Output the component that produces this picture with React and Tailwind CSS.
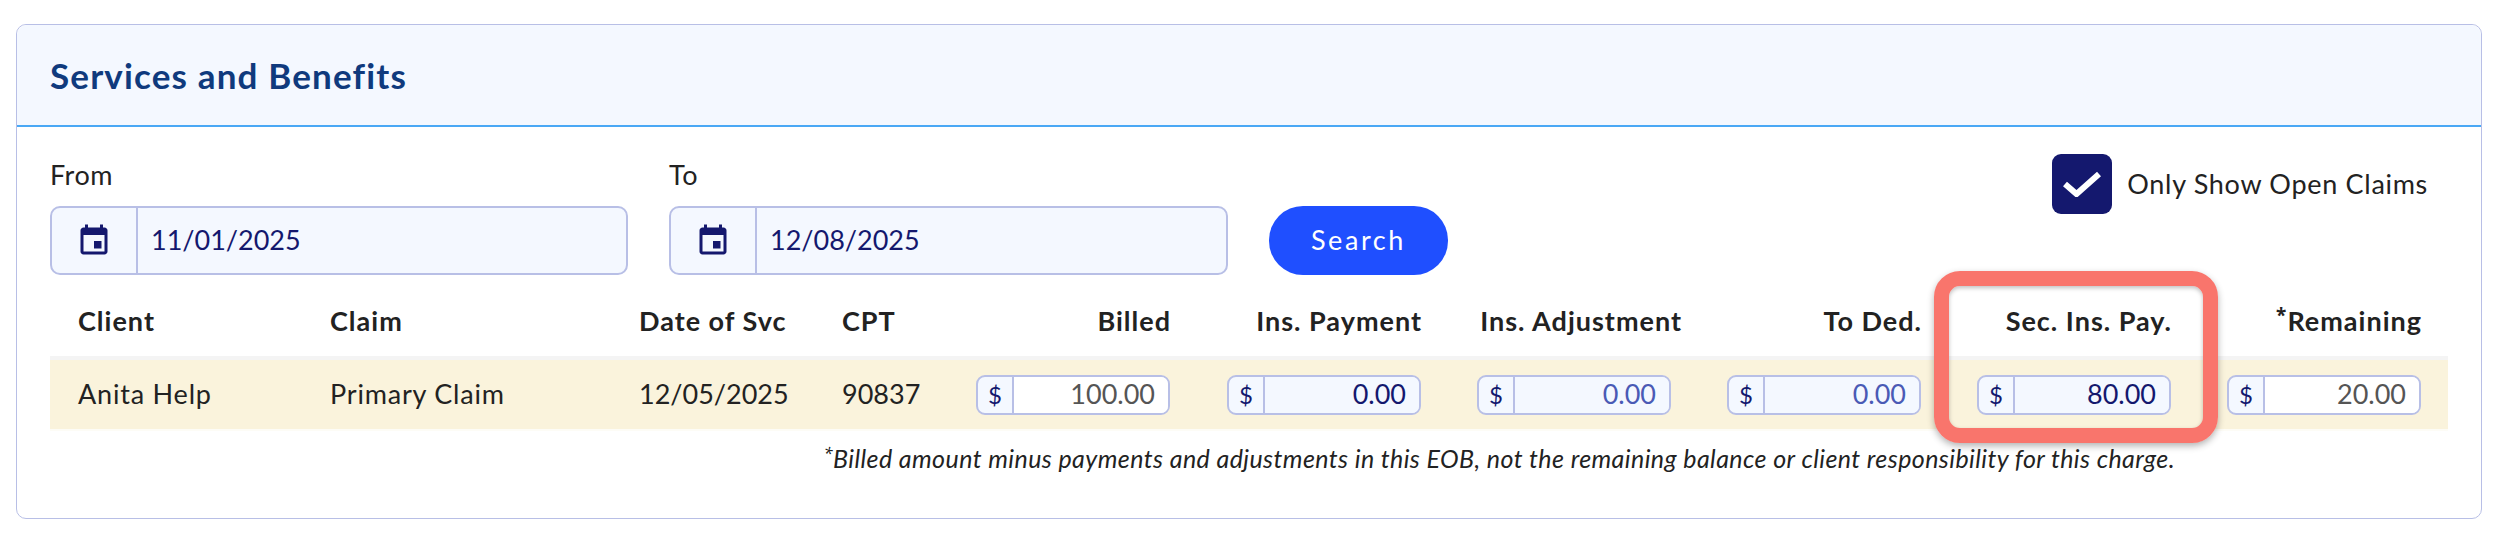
function CalendarIcon() {
  return (
    <svg width="36" height="36" viewBox="0 0 24 24" fill="#14186e" aria-hidden="true">
      <path d="M17 12h-5v5h5v-5zM16 1v2H8V1H6v2H5c-1.11 0-1.99.9-1.99 2L3 19c0 1.1.89 2 2 2h14c1.1 0 2-.9 2-2V5c0-1.1-.9-2-2-2h-1V1h-2zm3 18H5V8h14v11z" />
    </svg>
  );
}

function DateField({ label, value, widthClass, dividerClass }) {
  return (
    <div className={`flex flex-col ${widthClass}`}>
      <label className="h-[60px] pt-[12px] text-[27px] leading-[34px] tracking-[0.5px] text-[#222]">{label}</label>
      <div className="flex h-[69px] rounded-[10px] border-2 border-[#b8bfe6] bg-[#f4f8ff]">
        <div className={`flex items-center justify-center border-r-2 border-[#b8bfe6] ${dividerClass}`}>
          <CalendarIcon />
        </div>
        <div className="flex items-center pl-[13px] text-[27px] text-[#14186e]">{value}</div>
      </div>
    </div>
  );
}

function MoneyField({ value, tone }) {
  const styles = {
    readonly: "bg-white text-[#555]",
    active: "bg-[#f4f8ff] text-[#14186e]",
    muted: "bg-[#f4f8ff] text-[#4a5ab5]",
  };
  return (
    <div className="flex h-[40px] w-[194px] overflow-hidden rounded-[9px] border-2 border-[#b8bfe6] bg-[#f4f8ff]">
      <div className="flex w-[36px] shrink-0 items-center justify-center border-r-2 border-[#b8bfe6] text-[24px] text-[#14186e]">$</div>
      <div className={`flex flex-1 items-center justify-end pr-[13px] text-[27px] ${styles[tone]}`}>{value}</div>
    </div>
  );
}

const gridCols = "grid grid-cols-[252px_309px_203px_135px_249px_251px_250px_250px_250px_250px]";
const headRight = "pr-[27px] text-right";

const moneyCells = [
  ["100.00", "readonly"],
  ["0.00", "active"],
  ["0.00", "muted"],
  ["0.00", "muted"],
  ["80.00", "active"],
  ["20.00", "readonly"],
];

export default function App() {
  return (
    <div className="bg-white px-4 pt-6 pb-6 text-[#222]" style={{ fontFamily: '"Lato", "Noto Sans", sans-serif' }}>
      <section className="h-[495px] rounded-[10px] border border-[#b8bfe6] bg-white">
        <header className="flex h-[102px] items-center rounded-t-[10px] border-b-2 border-[#4aa8f5] bg-[#f4f8ff] px-[33px]">
          <h2 className="text-[35px] font-bold tracking-[1.15px] text-[#0f3a7d]">Services and Benefits</h2>
        </header>

        <div className="px-[33px]">
          <div className="flex items-start gap-[41px] pt-[19px]">
            <DateField label="From" value="11/01/2025" widthClass="w-[578px]" dividerClass="w-[86px]" />
            <DateField label="To" value="12/08/2025" widthClass="w-[559px]" dividerClass="w-[86px]" />
            <button className="mt-[60px] h-[69px] w-[179px] rounded-[34px] bg-[#1f4fff] text-[27px] tracking-[2.600px] text-white">Search</button>
            <div className="ml-auto mr-[20px] mt-[8px] flex items-center gap-[15px]">
              <div className="flex h-[60px] w-[60px] items-center justify-center rounded-[9px] bg-[#14186e]">
                <svg width="38" height="26" viewBox="0 0 38 26" fill="none" stroke="white" strokeWidth="6" aria-hidden="true">
                  <path d="M2 13 L13.500 23 L36 3" />
                </svg>
              </div>
              <span className="text-[27px] tracking-[0.7px] text-[#222]">Only Show Open Claims</span>
            </div>
          </div>

          <div className="relative mt-[10px]">
            <div className={`${gridCols} h-[71px] items-center pt-[2px] text-[27px] font-bold tracking-[1px] text-[#222]`}>
              <div className="pl-[28px]">Client</div>
              <div className="pl-[28px]">Claim</div>
              <div className="pl-[28px]">Date of Svc</div>
              <div className="pl-[28px]">CPT</div>
              <div className={headRight}>Billed</div>
              <div className={headRight}>Ins. Payment</div>
              <div className="pr-[17px] text-right">Ins. Adjustment</div>
              <div className={headRight}>To Ded.</div>
              <div className={headRight}>Sec. Ins. Pay.</div>
              <div className={headRight}>
                <span className="align-[9px] text-[19px] leading-none" style={{ fontFamily: '"Noto Sans", sans-serif' }}>*</span>Remaining
              </div>
            </div>
            <div className={`${gridCols} h-[75px] items-center border-t-[4px] border-b-[2px] border-t-[#f4f4f4] border-b-[#fdfcf6] bg-[#faf3dc] text-[27px] text-[#222]`}>
              <div className="pl-[28px] tracking-[0.8px]">Anita Help</div>
              <div className="pl-[28px] tracking-[0.8px]">Primary Claim</div>
              <div className="pl-[28px]">12/05/2025</div>
              <div className="pl-[28px]">90837</div>
              {moneyCells.map(([v, t], i) => (
                <div key={i} className="flex justify-end pr-[28px]">
                  <MoneyField value={v} tone={t} />
                </div>
              ))}
            </div>
            <p className="pt-[11px] pr-[273px] text-right text-[25px] italic leading-[32px] tracking-[0.42px] text-[#222]">
              <span className="align-[9px] text-[16px] leading-none" style={{ fontFamily: '"Noto Sans", sans-serif' }}>*</span>Billed amount minus payments and adjustments in this EOB, not the remaining balance or client responsibility for this charge.
            </p>
            <div className="absolute left-[1884px] top-[-14px] h-[172px] w-[284px] rounded-[26px] border-[15px] border-[#f9756c] shadow-[0_3px_7px_rgba(0,0,0,0.3),inset_0_2px_4px_rgba(0,0,0,0.25)]" />
          </div>
        </div>
      </section>
    </div>
  );
}
